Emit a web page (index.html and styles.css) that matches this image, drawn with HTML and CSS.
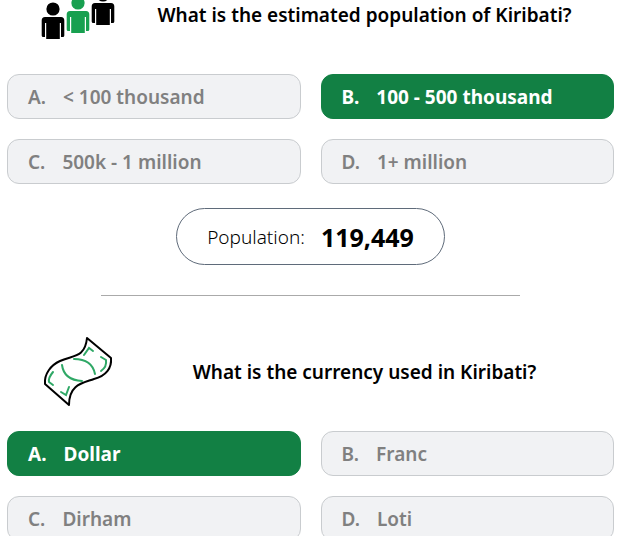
FILE: index.html
```html
<!DOCTYPE html>
<html lang="en">
<head>
    <meta charset="UTF-8">
    <meta name="viewport" content="width=device-width, initial-scale=1.0">
    <title>Kiribati Quiz</title>
    <link rel="stylesheet" href="styles.css">
</head>
<body>
    <section class="question">
        <div class="question-header first">
            <svg class="people-icon" viewBox="0 0 74 40" aria-hidden="true">
                <defs>
                    <g id="person">
                        <circle cx="12" cy="7" r="6.6"/>
                        <path d="M4 15H20Q23.300 15 23.300 18.500V33.500Q23.300 35 21.800 35H20V21H18.800V37H5.200V21H4V35H2.200Q.7 35 .7 33.500V18.500Q.7 15 4 15Z"/>
                    </g>
                </defs>
                <use href="#person" y="2"/>
                <use href="#person" x="25" y="-4" class="green"/>
                <use href="#person" x="50" y="-12"/>
            </svg>
            <h2>What is the estimated population of Kiribati?</h2>
        </div>
        <div class="options">
            <button type="button" class="option"><span class="letter">A.</span>&lt; 100 thousand</button>
            <button type="button" class="option correct"><span class="letter">B.</span>100 - 500 thousand</button>
            <button type="button" class="option"><span class="letter">C.</span>500k - 1 million</button>
            <button type="button" class="option"><span class="letter">D.</span>1+ million</button>
        </div>
        <div class="answer">
            <span class="answer-label">Population:</span>
            <strong>119,449</strong>
        </div>
    </section>

    <hr>

    <section class="question">
        <div class="question-header">
            <svg class="money-icon" viewBox="0 0 74 72" aria-hidden="true">
                <path class="note" d="M46 2L70 22C71 32 65 40 53 43C42 47 28 48 28 69L4 48C3 38 10 29 19 25C32 19 44 22 46 2Z"/>
                <path class="marks" d="M43 19L48 12L52 15M60 21L65 24Q66 31 60 35M12 36Q7 42 8 46L12 49M20 56L25 59L28 51M33 23Q51 23 54 38M21 29Q23 44 41 45"/>
            </svg>
            <h2>What is the currency used in Kiribati?</h2>
        </div>
        <div class="options">
            <button type="button" class="option correct"><span class="letter">A.</span>Dollar</button>
            <button type="button" class="option"><span class="letter">B.</span>Franc</button>
            <button type="button" class="option"><span class="letter">C.</span>Dirham</button>
            <button type="button" class="option"><span class="letter">D.</span>Loti</button>
        </div>
    </section>
</body>
</html>
```

FILE: styles.css
```css
body {
    font-family: "Noto Sans", "Open Sans", sans-serif;
    margin: 0;
    padding: 0 7px;
    background-color: #fff;
    overflow: hidden;
}
.question-header {
    display: flex;
    align-items: center;
    height: 135px;
    padding-left: 34px;
}
.question-header.first {
    align-items: flex-start;
    height: 74px;
}
.question-header svg {
    flex: none;
    width: 74px;
}
.people-icon {
    height: 40px;
}
.money-icon {
    height: 72px;
    margin-top: 16px;
}
.green {
    fill: #18a050;
}
.note {
    fill: #fff;
    stroke: #000;
    stroke-width: 2;
    stroke-linejoin: round;
}
.marks {
    fill: none;
    stroke: #2fa866;
    stroke-width: 2;
    stroke-linecap: round;
}
h2 {
    flex: 1;
    margin: 0;
    font-size: 19px;
    font-weight: 600;
    line-height: 30px;
    text-align: center;
}
.money-icon + h2 {
    margin-top: 16px;
}
.options {
    display: grid;
    grid-template-columns: 1fr 1fr;
    gap: 20px;
}
.option {
    height: 45px;
    padding: 0 20px;
    border: 1px solid #c9cccf;
    border-radius: 12px;
    background-color: #f1f2f4;
    color: #808080;
    font-family: inherit;
    font-size: 19px;
    font-weight: 600;
    text-align: left;
    cursor: pointer;
}
.option.correct {
    background-color: #128044;
    border-color: #128044;
    color: #fff;
    font-weight: 700;
}
.letter {
    margin-right: 17px;
}
.answer {
    display: flex;
    align-items: center;
    gap: 16px;
    box-sizing: border-box;
    width: fit-content;
    height: 57px;
    margin: 24px auto 30px;
    padding: 0 30px;
    border: 1px solid #5f6b7a;
    border-radius: 29px;
}
.answer-label {
    font-size: 19px;
    font-weight: 300;
}
.answer strong {
    font-size: 25px;
}
hr {
    width: 69%;
    margin: 0 auto;
    border: none;
    border-top: 1px solid #aaa;
}
```
